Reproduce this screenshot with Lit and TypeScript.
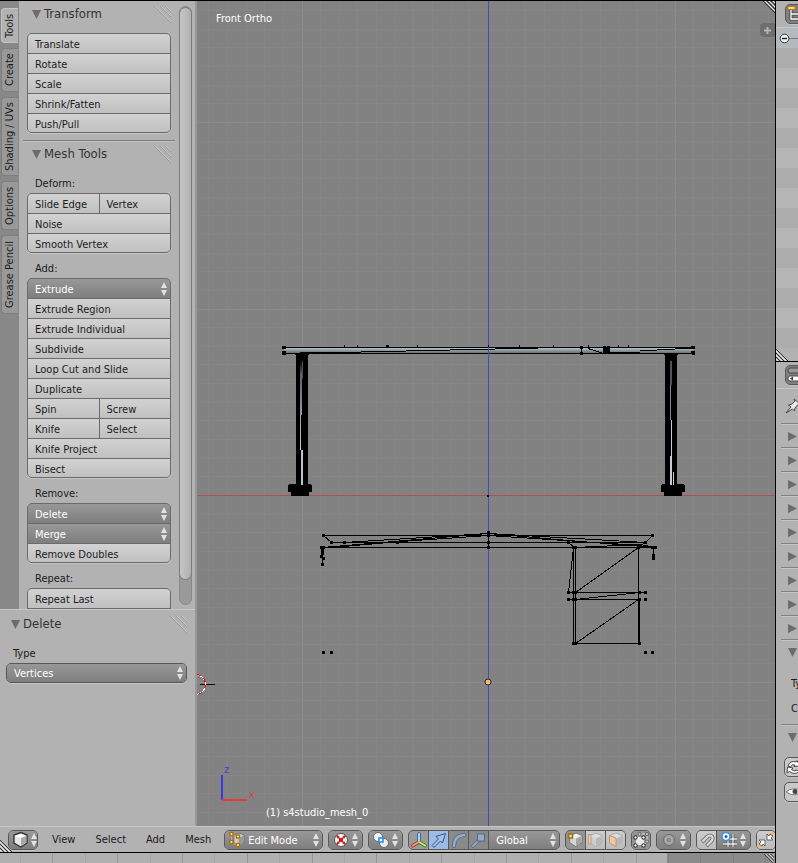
import { LitElement, html, css, svg, nothing, TemplateResult } from "lit";
import { customElement } from "lit/decorators.js";

type Row = { kind: "op" | "menu"; names: string[] };

const op = (...names: string[]): Row => ({ kind: "op", names });
const menu = (name: string): Row => ({ kind: "menu", names: [name] });

const TRANSFORM = [op("Translate"), op("Rotate"), op("Scale"), op("Shrink/Fatten"), op("Push/Pull")];

const MESH_TOOLS: { label: string; rows: Row[] }[] = [
  { label: "Deform:", rows: [op("Slide Edge", "Vertex"), op("Noise"), op("Smooth Vertex")] },
  {
    label: "Add:",
    rows: [
      menu("Extrude"), op("Extrude Region"), op("Extrude Individual"), op("Subdivide"),
      op("Loop Cut and Slide"), op("Duplicate"), op("Spin", "Screw"), op("Knife", "Select"),
      op("Knife Project"), op("Bisect"),
    ],
  },
  { label: "Remove:", rows: [menu("Delete"), menu("Merge"), op("Remove Doubles")] },
  { label: "Repeat:", rows: [op("Repeat Last"), op("")] },
];

const TABS = ["Tools", "Create", "Shading / UVs", "Options", "Grease Pencil"];

const arrows = html`<svg class="arrows" width="6" height="14" viewBox="0 0 6 14" aria-hidden="true">
  <path d="M3 0L6 6H0ZM3 14L6 8H0Z" fill="#e2e2e2" />
</svg>`;

const triDown = html`<svg width="9" height="9" viewBox="0 0 9 9" aria-hidden="true">
  <path d="M0 0H9L4.500 9Z" fill="#6c6c6c" />
</svg>`;

const triRight = html`<svg width="9" height="9" viewBox="0 0 9 9" aria-hidden="true">
  <path d="M0 0L9 4.500L0 9Z" fill="#6c6c6c" />
</svg>`;

const grip = html`<svg width="17" height="17" viewBox="0 0 17 17" aria-hidden="true">
  <path d="M0 0L17 17M6 0L17 11M11 0L17 6" stroke="#979797" stroke-width=".8" />
  <path d="M1 0L17 16M7 0L17 10M12 0L17 5" stroke="#cfcfcf" stroke-width=".7" />
</svg>`;

const corner = html`<svg width="12" height="12" viewBox="0 0 12 12" aria-hidden="true">
  <path d="M0 0L12 12M4 0L12 8M8 0L12 4" stroke="#333" />
  <path d="M2 0L12 10M6 0L12 6M10 0L12 2" stroke="#e8e8e8" />
</svg>`;

const cube = (a: string, b: string, c: string, line = "#555") => svg`
  <path d="M3 4.500L9 2L15 4.500V11.500L9 15.500L3 11.500Z" fill="${a}" stroke="${line}" />
  <path d="M3.500 5L9 7.500V15L3.500 11.500Z" fill="${b}" />
  <path d="M14.500 5L9 7.500V15L14.500 11.500Z" fill="${c}" />`;

const icon = (body: unknown) =>
  html`<svg class="icon" width="18" height="18" viewBox="0 0 18 18" fill="none" aria-hidden="true">${body}</svg>`;

const ICONS = {
  cube: icon(svg`<path d="M2 4L9 1.500L15 4V12L9 16L2 12Z" fill="#fff" stroke="#333" stroke-width="1.400" />
    <path d="M3 5L9 7V15L3 11.500Z" fill="#e6e6e6" /><path d="M14.300 5L9 7V15L14.300 11.500Z" fill="#a9a9a9" />`),
  edit: icon(svg`<path d="M6 4L11 2L16 4V11L11 15L6 12Z" fill="#d4d4d4" stroke="#777" />
    <path d="M11 7V15L16 11V4Z" fill="#999" />
    <path d="M3.500 4V12L10 14.500V5.500Z" stroke="#c9a86a" />
    <g fill="#fff" stroke="#a8730f" stroke-width="1.400"><rect x="2" y="1.500" width="3" height="3" /><rect x="8.500" y="4" width="3" height="3" /><rect x="2" y="9.500" width="3" height="3" /><rect x="8.500" y="12.500" width="3" height="3" /></g>`),
  ball: icon(svg`<circle cx="9" cy="9" r="6.500" fill="#f4f4f4" stroke="#555" />
    <g fill="#c81e1e"><path d="M5 4L8 6L6 8L4 5Z" /><path d="M13 4L10 6L12 8L14 5Z" /><path d="M5 14L8 12L6 10L4 13Z" /><path d="M13 14L10 12L12 10L14 13Z" /><rect x="7" y="7" width="4" height="4" /></g>`),
  pivotTwo: icon(svg`<circle cx="6" cy="6" r="4.500" fill="#f5f5f5" stroke="#666" /><circle cx="12" cy="12" r="4.500" fill="#ececec" stroke="#666" />
    <rect x="7" y="7" width="4" height="4" fill="#fff" stroke="#2a93e0" stroke-width="1.600" />`),
  axes: icon(svg`<g stroke-linecap="round"><path d="M9 11V3" stroke="#2c5c93" stroke-width="3.600" /><path d="M9 11L3 14.500" stroke="#a3301e" stroke-width="3.600" /><path d="M9 11L15 14.500" stroke="#4b7a12" stroke-width="3.600" />
    <path d="M9 10V3" stroke="#a9d4f7" stroke-width="2" /><path d="M8 11.500L3 14.500" stroke="#ff9a80" stroke-width="2" /><path d="M10 11.500L15 14.500" stroke="#c3ee6a" stroke-width="2" /></g>`),
  arrow: icon(svg`<path d="M2 14.500L8.500 8L6 5.500L15.500 2.500L12.500 12L10.500 10L4 16.500Z" fill="#9fc3ea" stroke="#34567f" stroke-linejoin="round" />`),
  arc: icon(svg`<path d="M4 15Q4 5 14 4" stroke="#56697f" stroke-width="4" stroke-linecap="round" /><path d="M4 15Q4 5 14 4" stroke="#93acc9" stroke-width="2.400" stroke-linecap="round" />`),
  scale: icon(svg`<path d="M3 15L10 8" stroke="#56697f" stroke-width="3.500" stroke-linecap="round" /><path d="M3 15L10 8" stroke="#93acc9" stroke-width="2" stroke-linecap="round" /><rect x="7.500" y="3" width="7" height="7" fill="#93acc9" stroke="#56697f" />`),
  vert: icon(svg`${cube("#eee", "#d6d6d6", "#a4a4a4", "#777")}<rect x="1.500" y="3" width="4" height="4" fill="#ffd58a" stroke="#9c6a0e" stroke-width="1.400" />`),
  edge: icon(svg`${cube("#ddd", "#cfcfcf", "#b8b8b8", "#aaa")}<rect x="1.500" y="3.500" width="2.500" height="9.500" fill="#f3c9a2" stroke="#b99775" stroke-width=".8" />`),
  face: icon(svg`${cube("#ddd", "#f0c8a0", "#b8b8b8", "#aaa")}<path d="M2.500 4.500L9 7V15.500L2.500 12Z" stroke="#b99775" fill="#efc9a4" />`),
  limit: icon(svg`<path d="M4 7L8 3H15V11L11 14" stroke="#ddd" /><rect x="4" y="6" width="8" height="8" fill="#e8e8e8" />
    <g fill="#c4c4c4" stroke="#666"><circle cx="7.500" cy="3" r="1.600" /><circle cx="15" cy="3" r="1.600" /><circle cx="15" cy="10.500" r="1.600" /></g>
    <g fill="#fff" stroke="#111"><circle cx="3.500" cy="6.500" r="1.700" /><circle cx="11.500" cy="6.500" r="1.700" /><circle cx="3.500" cy="14.500" r="1.700" /><circle cx="11.500" cy="14.500" r="1.700" /></g>`),
  prop: icon(svg`<circle cx="9" cy="9" r="5.500" fill="#a2a2a2" stroke="#6c6c6c" /><circle cx="9" cy="9" r="3" fill="#8a8a8a" stroke="#b4b4b4" />`),
  magnet: icon(svg`<path d="M4 11L9.500 5.500Q12 3.500 14 5.500Q15.500 7.500 13.500 10L8.500 15" stroke="#777" stroke-width="4" /><path d="M4.500 10.500L9.500 5.500Q12 3.500 14 5.500Q15.500 7.500 13.500 10L9 14.500" stroke="#ddd" stroke-width="2" />`),
  snap: icon(svg`<path d="M8 3V16M13 3V16M3 8H17M3 13H17" stroke="#444" stroke-width="2.600" /><path d="M8 3V16M13 3V16M3 8H17M3 13H17" stroke="#eee" stroke-width="1.300" />
    <circle cx="6" cy="5.500" r="4" fill="#fff" stroke="#3f8fd9" stroke-width="1.600" /><circle cx="6" cy="5.500" r="1.500" fill="#1d5fae" />`),
  snapTo: icon(svg`<circle cx="15" cy="3" r="2.200" fill="#f6b877" /><circle cx="3" cy="15" r="2.200" fill="#f6b877" />
    <path d="M10 3V9H16L14 7L16 5L13 3L12 5ZM8 15V9H2L4 11L2 13L5 15L6 13Z" fill="#fff" stroke="#555" stroke-width=".9" />`),
  outliner: icon(svg`<path d="M5 5V14H14M5 9H14" stroke="#444" stroke-width="3" /><path d="M5 5V14H14M5 9H14" stroke="#fff" stroke-width="1.300" /><rect x="2" y="1.500" width="7" height="3" fill="#ffe2a0" stroke="#b47a12" />`),
  props: icon(svg`<rect x="2" y="2" width="15" height="5" rx="2" fill="#999" stroke="#444" /><rect x="2" y="10" width="15" height="5" rx="2" fill="#fff" stroke="#444" /><path d="M7 10.500L4 12.500L7 14.500Z" fill="#333" />`),
  pin: icon(svg`<path d="M2 16L7 10L4.500 8L8 7L11 4L10 2L16 7L14 7.500L11 11L10.500 14L8.500 12Z" fill="#e8e8e8" stroke="#444" />`),
  link: icon(svg`<path d="M3 8Q5 2 11 4L12 2.500L15 8L9 8.500L10 7Q7 5.500 5.500 9ZM2 15L2.500 9L8 10L6.500 11.500Q9 14 12 12L14 14Q9 17 4.500 13.500Z" fill="#fff" stroke="#444" />`),
  eye: icon(svg`<path d="M1 9Q8 3 17 8Q10 15 1 9Z" fill="#fff" stroke="#777" /><circle cx="10" cy="8.500" r="2.500" fill="#444" />`),
};

/* Edit-mode mesh, in canvas units. */
const VERTS = [
  [323, 535], [331, 542], [344, 542], [397, 542], [488, 532], [488, 535], [488, 542], [488, 547],
  [321, 547], [323, 547], [322, 550], [322, 553], [321, 556], [323, 558], [322, 564],
  [652, 535], [645, 542], [568, 542], [573, 547], [575, 547], [638, 547], [652, 547], [655, 547],
  [653, 555], [653, 558], [568, 592], [573, 592], [575, 592], [639, 592], [645, 592],
  [568, 599], [573, 599], [575, 599], [639, 599], [645, 599], [573, 643], [575, 643], [639, 643],
  [323, 652], [331, 652], [645, 652], [652, 652],
  [283, 347], [284, 347], [283, 352], [284, 352], [283, 353], [284, 353],
  [581, 347], [581, 353], [692, 347], [693, 347], [692, 352], [693, 352], [693, 353],
  [604, 347], [608, 347], [604, 352], [608, 352],
];

const TICKS = [344, 357, 387, 417, 488, 519, 553, 588, 618, 628];

const EDGES =
  "M323 535H652M323 535L331 542H645M645 542L652 535M322 547H655M322 547L488 533L568 540L655 547" +
  "M331 547L400 541L488 535L640 545M344 542L488 533M488 533L645 542M488 532V547M568 542L574 547M574 547L640 544L655 547" +
  "M638 547L646 541M573 547L568 592M573 547V643M575 547V643M638 547V643M639 599V643M575 592L638 547" +
  "M568 592H645M568 599H640M575 599L639 592M575 643L638 599M573 643H640M322 547V564M653 547V558";

const GRID = 18.65;
const gridLines = () => {
  const out: TemplateResult[] = [];
  for (let i = -16; i <= 16; i++) {
    const x = Math.round(488 + i * GRID);
    out.push(svg`<path class=${i % 10 ? "minor" : "major"} d="M${x}.5 0V830" />`);
  }
  for (let i = -27; i <= 18; i++) {
    const y = Math.round(495 + i * GRID);
    out.push(svg`<path class=${i % 10 ? "minor" : "major"} d="M190 ${y}.5H780" />`);
  }
  return out;
};

@customElement("app-root")
export class AppRoot extends LitElement {
  static styles = css`
    :host {
      display: flex;
      height: 100vh;
      overflow: hidden;
      box-sizing: border-box;
      border-top: 1px solid #000;
      background: #b2b2b2;
      color: #1c1c1c;
      font-family: "DejaVu Sans Condensed", "DejaVu Sans", sans-serif;
      font-size: 11px;
      line-height: 20px;
    }
    * { box-sizing: border-box; }
    svg { display: block; flex: none; }
    button, select {
      margin: 0; padding: 0; border: 0; border-radius: 0; appearance: none;
      font: inherit; color: inherit; background: none; text-align: left;
    }
    .workspace { flex: 1; min-width: 0; display: flex; flex-direction: column; border-right: 1px solid #000; }
    .editor { flex: 1; min-height: 0; display: flex; }

    .left { width: 197px; display: flex; flex-direction: column; border-right: 2px solid #989898; }
    .shelf { flex: 1; min-height: 0; overflow: hidden; display: flex; }
    .tabs { width: 19px; padding: 7px 1px 0 1px; background: #888; display: flex; flex-direction: column; gap: 5px; }
    .tab {
      writing-mode: vertical-rl; transform: rotate(180deg); width: 17px; height: 79px; line-height: 16px;
      text-align: center; background: #999; border: 1px solid #7e7e7e; border-left: 0;
      border-radius: 0 4px 4px 0;
    }
    .tab.t0 { height: 35px; background: #b2b2b2; border-color: #c4c4c4; }
    .tab.t1 { height: 44px; }
    .tab.t3 { height: 49px; }
    .tools { flex: 1; padding: 3px 8px 0 8px; overflow: hidden; }
    .phead { display: flex; align-items: center; height: 20px; gap: 3px; padding-left: 5px; font-size: 13px; color: #333; margin-bottom: 9px; }
    .phead h2 { margin: 0; flex: 1; font: inherit; }
    .transform .group { margin-bottom: 7px; }
    .mesh { border-top: 1px solid #7c7c7c; box-shadow: inset 0 1px #c4c4c4; margin: 0 -4px; padding: 3px 4px 0; }
    .glabel { height: 20px; padding-left: 8px; line-height: 22px; }
    .group {
      display: flex; flex-direction: column; border: 1px solid #6b6b6b; border-radius: 5px; overflow: hidden;
      background: #6b6b6b; gap: 1px; margin-bottom: 5px; box-shadow: 0 1px #c4c4c4;
    }
    .row { display: flex; gap: 1px; height: 19px; }
    .row:last-child { height: 18px; }
    .row button { flex: 1; padding: 2px 0 0 7px; background: linear-gradient(#d2d2d2, #c0c0c0); line-height: 18px; }
    .pick { position: relative; flex: 1; display: flex; min-width: 0; background: linear-gradient(#989898, #7e7e7e); color: #fff; }
    .pick select { flex: 1; min-width: 0; padding: 1px 0 0 7px; line-height: 17px; }
    .pick .arrows { position: absolute; right: 3px; top: 50%; transform: translateY(-50%); pointer-events: none; }
    .pick .icon { position: absolute; left: 3px; top: 0; pointer-events: none; }
    .track {
      width: 13px; margin: 5px 3px 4px 0; border: 1px solid #888; border-radius: 7px; background: #9a9a9a;
    }
    .thumb { height: 96%; margin: 0 -1px; border: 1px solid #7c7c7c; border-radius: 7px; background: linear-gradient(90deg, #c6c6c6, #b0b0b0); }
    .redo { height: 217px; border-top: 1px solid #c8c8c8; padding: 4px 8px 0 6px; }
    .redo label { display: block; padding-left: 7px; line-height: 22px; height: 20px; }
    .box { border: 1px solid #585858; border-radius: 5px; overflow: hidden; height: 20px; box-shadow: 0 1px #c4c4c4; display: flex; }

    .view { flex: 1; min-width: 0; position: relative; background: #828282; }
    .canvas { width: 100%; height: 100%; }
    .minor { stroke: #868686; }
    .major { stroke: #8b8b8b; }
    .more { position: absolute; right: 0; top: 22px; width: 15px; height: 14px; background: #6e6e6e; border-radius: 4px 0 0 4px; }
    .more svg { margin: 0 auto; }
    .vcorner { position: absolute; right: 0; top: 0; }

    .bar { height: 26px; border-top: 1px solid #c6c6c6; display: flex; align-items: center; padding-left: 8px; gap: 5px; overflow: hidden; position: relative; }
    .bar .box { flex: none; }
    .bar button { height: 18px; display: flex; align-items: center; }
    .bar .tool { width: 19px; justify-content: center; }
    .bar .single .tool { width: 18px; }
    .bar .drop { gap: 1px; justify-content: space-between; padding: 0 4px 0 3px; width: 33px; background: linear-gradient(#989898, #7e7e7e); }
    .bar .first { width: 28px; padding: 0 3px 0 3px; }
    .bar .gap { gap: 1px; background: #585858; }
    .bar .lite { background: linear-gradient(#cdcdcd, #bcbcbc); }
    .bar .mid { background: #9b9b9b; }
    .bar .on { background: #9dbce4; }
    .bar .off { background: #8a8a8a; }
    .bar .act { background: #949494; }
    .menus { display: flex; gap: 20px; padding: 0 8px 0 9px; }
    .mode { width: 99px; }
    .mode select { padding-left: 23px; }
    .orient { width: 70px; }
    .flip { position: absolute; left: 0; bottom: 0; transform: rotate(180deg); }
    .time { height: 11px; border-top: 1px solid #000; display: flex; background: #b0b0b0; position: relative; overflow: hidden; }
    .time svg { width: 100%; height: 10px; }
    .time .tcorner { position: absolute; right: 0; top: 1px; width: 12px; height: 12px; }

    .side { width: 22px; overflow: hidden; display: flex; flex-direction: column; }
    .outliner { height: 361px; border-bottom: 1px solid #000; position: relative; }
    .shead { height: 27px; width: 40px; padding: 3px 0 0 9px; border-bottom: 1px solid #c8c8c8; }
    .shead .box { width: 30px; height: 20px; background: #808080; }
    .orow { height: 20px; width: 40px; display: flex; align-items: center; padding-left: 3px; }
    .orow:nth-child(odd) { background: #adadad; }
    .orow:nth-child(even) { background: #b5b5b5; }
    .orow.sel { background: #b4bac0; }
    .properties { width: 40px; }
    .pinrow { height: 34px; padding: 8px 0 0 8px; }
    .closed, .open { height: 24px; margin-left: 5px; padding: 8px 0 0 7px; border-top: 1px solid #828282; box-shadow: inset 0 1px #c4c4c4; }
    .open { height: 85px; }
    .open p { margin: 0; height: 25px; white-space: nowrap; padding-left: 3px; line-height: 18px; }
    .open .tri { height: 27px; }
    .open .box { margin: 0 0 5px -4px; width: 30px; height: 20px; background: #c8c8c8; }
    .open .tri.tight { height: 24px; }
  `;

  private group(rows: Row[]) {
    return html`<div class="group">
      ${rows.map((r) => html`<div class="row">
        ${r.kind === "menu"
          ? html`<div class="pick"><select aria-label=${r.names[0]}><option>${r.names[0]}</option></select>${arrows}</div>`
          : r.names.map((n) => html`<button>${n}</button>`)}
      </div>`)}
    </div>`;
  }

  private head(title: string) {
    return html`<header class="phead">${triDown}<h2>${title}</h2>${grip}</header>`;
  }

  private tool(name: string, body: unknown, cls: string) {
    return html`<button class="tool ${cls}" aria-label=${name}>${body}</button>`;
  }

  private drop(name: string, body: unknown, cls = "") {
    return html`<button class="drop ${cls}" aria-haspopup="menu" aria-label=${name}>${body}${arrows}</button>`;
  }

  private scene() {
    return html`<svg class="canvas" viewBox="197 1 578 825" preserveAspectRatio="xMidYMid slice" fill="none">
      <defs>
        <linearGradient id="steel" x1="0" y1="0" x2="0" y2="1"><stop offset="0" stop-color="#b4c2ca" /><stop offset="1" stop-color="#66706f" /></linearGradient>
        <linearGradient id="leg" x1="0" y1="0" x2="0" y2="1"><stop offset="0" stop-color="#000" /><stop offset=".15" stop-color="#59636c" /><stop offset="1" stop-color="#c2d0d6" /></linearGradient>
      </defs>
      <g shape-rendering="crispEdges">
        ${gridLines()}
        <path d="M190 495.500H780" stroke="#a85454" />
        <rect x="284" y="348" width="409" height="5" fill="url(#steel)" />
        <path d="M284 347.500H693M284 353.500H693" stroke="#000" />
        <path d="M300 352.500H361M361 351.500H406M406 350.500H450M450 349.500H495M495 348.500H538M581 347V353M588 348.500L602 353M608 352.500H640M640 350.500H657M657 349.500H675M675 348.500H693" stroke="#000" />
        <rect x="603" y="347" width="7" height="7" fill="#000" />
        <path d="M605.500 351V352M607.500 351V352" stroke="#aaa" />
        <g fill="#000">
          <rect x="296" y="354" width="12" height="131" /><rect x="288" y="485" width="24" height="7" /><rect x="291" y="492" width="18" height="4" /><rect x="289" y="484" width="22" height="2" />
          <rect x="665" y="354" width="12" height="131" /><rect x="661" y="485" width="24" height="7" /><rect x="664" y="492" width="18" height="4" /><rect x="662" y="484" width="22" height="2" />
          <rect x="295" y="354" width="14" height="1" /><rect x="664" y="354" width="14" height="1" />
        </g>
        <rect x="300" y="361" width="2" height="89" fill="url(#leg)" /><rect x="302" y="361" width="1" height="18" fill="#485058" /><rect x="301" y="450" width="2" height="35" fill="#b7c6cd" />
        <path d="M301.500 415V450" stroke="#000" />
        <rect x="670" y="361" width="2" height="24" fill="#4c5557" /><rect x="670" y="385" width="1" height="35" fill="#7d8a90" /><rect x="671" y="420" width="1" height="65" fill="#c2d0d6" /><rect x="670" y="456" width="1" height="29" fill="#c2d0d6" /><rect x="673" y="472" width="1" height="13" fill="#c2d0d6" />
        <path d="M488.500 0V830" stroke="#4949bd" />
        <path d=${EDGES} stroke="#000" transform="translate(.5 .5)" />
        ${VERTS.map(([x, y]) => svg`<rect x=${x - 1} y=${y - 1} width="3" height="3" fill="#000" />`)}
        ${TICKS.map((x) => svg`<rect x=${x} y="345" width="1" height="2" fill="#000" />`)}
        <rect x="386" y="345" width="3" height="2" fill="#000" /><rect x="487" y="495" width="2" height="2" fill="#000" />
        <path d="M222 775V800" stroke="#3a3ae6" stroke-width="2" /><path d="M222 800H247" stroke="#e63a3a" stroke-width="2" />
        <path d="M200 684.500H215" stroke="#000" />
        <circle cx="195.500" cy="684.500" r="10" stroke="#fff" /><circle cx="195.500" cy="684.500" r="10" stroke="#f00" stroke-dasharray="4 4" />
      </g>
      <circle cx="488" cy="682" r="3" fill="#eebb85" stroke="#2b2014" />
      <g font-family="DejaVu Sans Condensed, DejaVu Sans, sans-serif" font-size="11">
        <text x="216" y="22" fill="#fff">Front Ortho</text>
        <text x="266" y="816" fill="#fff">(1) s4studio_mesh_0</text>
        <text x="224" y="773" fill="#4343dc">z</text>
        <text x="249" y="798" fill="#dc4343">x</text>
      </g>
    </svg>`;
  }

  render() {
    return html`
      <main class="workspace">
        <div class="editor">
          <aside class="left">
            <div class="shelf">
              <nav class="tabs">${TABS.map((t, i) => html`<button class="tab t${i}">${t}</button>`)}</nav>
              <div class="tools">
                <section class="transform">${this.head("Transform")}${this.group(TRANSFORM)}</section>
                <section class="mesh">
                  ${this.head("Mesh Tools")}
                  ${MESH_TOOLS.map((s) => html`<div class="glabel">${s.label}</div>${this.group(s.rows)}`)}
                </section>
              </div>
              <div class="track"><div class="thumb"></div></div>
            </div>
            <section class="redo">
              ${this.head("Delete")}
              <label for="type">Type</label>
              <div class="box"><div class="pick"><select id="type"><option>Vertices</option></select>${arrows}</div></div>
            </section>
          </aside>
          <section class="view">
            ${this.scene()}
            <div class="vcorner">${corner}</div>
            <button class="more" aria-label="Show properties">
              <svg width="7" height="7" viewBox="0 0 7 7"><path d="M3.500 0V7M0 3.500H7" stroke="#b4b4b4" stroke-width="2" /></svg>
            </button>
          </section>
        </div>
        <div class="bar">
          <div class="box">${this.drop("Editor type", ICONS.cube, "first")}</div>
          <nav class="menus">${["View", "Select", "Add", "Mesh"].map((m) => html`<button>${m}</button>`)}</nav>
          <div class="box mode"><div class="pick">${ICONS.edit}<select aria-label="Mode"><option>Edit Mode</option></select>${arrows}</div></div>
          <div class="box">${this.drop("Viewport shading", ICONS.ball)}</div>
          <div class="box">${this.drop("Pivot point", ICONS.pivotTwo)}</div>
          <div class="box gap">
            ${this.tool("Manipulator", ICONS.axes, "mid")}${this.tool("Translate manipulator", ICONS.arrow, "on")}${this.tool("Rotate manipulator", ICONS.arc, "off")}${this.tool("Scale manipulator", ICONS.scale, "off")}
            <div class="pick orient"><select aria-label="Orientation"><option>Global</option></select>${arrows}</div>
          </div>
          <div class="box gap">
            ${this.tool("Vertex select", ICONS.vert, "act")}${this.tool("Edge select", ICONS.edge, "lite")}${this.tool("Face select", ICONS.face, "lite")}
          </div>
          <div class="box single">${this.tool("Limit selection", ICONS.limit, "act")}</div>
          <div class="box">${this.drop("Proportional editing", ICONS.prop)}</div>
          <div class="box gap">${this.tool("Snap", ICONS.magnet, "lite")}${this.drop("Snap element", ICONS.snap)}</div>
          <div class="box single">${this.tool("Snap target", ICONS.snapTo, "lite")}</div>
          <div class="flip">${corner}</div>
        </div>
        <div class="time">
          <svg shape-rendering="crispEdges" aria-hidden="true">
            <rect x="667" width="2000" height="10" fill="#8b8b8b" />
            ${Array.from({ length: 24 }, (_, i) => {
              const x = Math.round(20 + i * 32.4);
              return svg`<rect x=${x} width="1" height="10" fill=${x > 667 ? "#808080" : i % 2 ? "#989898" : "#a6a6a6"} />`;
            })}
          </svg>
          <div class="tcorner">${corner}</div>
        </div>
      </main>
      <aside class="side">
        <section class="outliner">
          <div class="shead"><button class="box" aria-label="Outliner">${ICONS.outliner}</button></div>
          ${Array.from({ length: 16 }, (_, i) => html`<div class="orow ${i ? "" : "sel"}">
            ${i ? nothing : html`<svg width="20" height="11" viewBox="0 0 20 11" fill="none"><path d="M10 5.500H20" stroke="#777" /><circle cx="5.500" cy="5.500" r="4.300" fill="#f2f2f2" stroke="#333" /><path d="M3 5.500H8" stroke="#222" stroke-width="1.400" /></svg>`}
          </div>`)}
          <div class="flip">${corner}</div>
        </section>
        <section class="properties">
          <div class="shead"><button class="box" aria-label="Properties">${ICONS.props}</button></div>
          <div class="pinrow">${ICONS.pin}</div>
          ${Array.from({ length: 9 }, () => html`<div class="closed">${triRight}</div>`)}
          <div class="open"><div class="tri">${triDown}</div><p>Type</p><p>Count</p></div>
          <div class="open">
            <div class="tri tight">${triDown}</div>
            <button class="box" aria-label="Refresh">${ICONS.link}</button>
            <button class="box" aria-label="Visibility">${ICONS.eye}</button>
          </div>
        </section>
      </aside>
    `;
  }
}
